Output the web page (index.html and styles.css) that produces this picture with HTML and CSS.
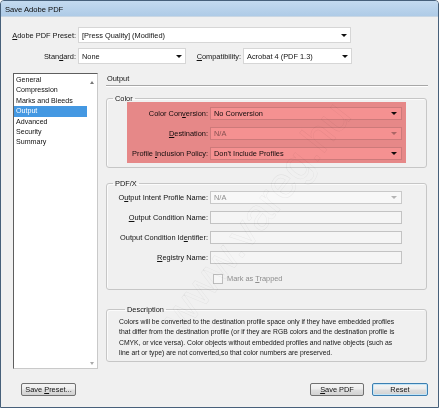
FILE: index.html
```html
<!DOCTYPE html>
<html lang="en">
<head>
<meta charset="utf-8">
<title>Save Adobe PDF</title>
<link rel="stylesheet" href="styles.css">
</head>
<body>
<div class="window">
  <div class="titlebar">Save Adobe PDF</div>
  <div class="client">
    <div class="presets">
      <div class="row">
        <span class="lbl lbl-main"><u>A</u>dobe PDF Preset:</span>
        <div class="combo combo-preset"><span class="val">[Press Quality] (Modified)</span><i class="arrow"></i></div>
      </div>
      <div class="row">
        <span class="lbl lbl-main">Stan<u>d</u>ard:</span>
        <div class="combo combo-standard"><span class="val">None</span><i class="arrow"></i></div>
        <span class="lbl lbl-compat"><u>C</u>ompatibility:</span>
        <div class="combo combo-compat"><span class="val">Acrobat 4 (PDF 1.3)</span><i class="arrow"></i></div>
      </div>
    </div>

    <div class="main">
      <div class="listbox">
        <ul class="items">
          <li>General</li>
          <li>Compression</li>
          <li>Marks and Bleeds</li>
          <li class="selected">Output</li>
          <li>Advanced</li>
          <li>Security</li>
          <li>Summary</li>
        </ul>
        <div class="scroll">
          <i class="sarrow up"></i>
          <i class="sarrow down"></i>
        </div>
      </div>

      <div class="panel">
        <div class="panel-title">Output</div>

        <fieldset class="group group-color">
          <legend>Color</legend>
          <div class="field">
            <span class="flbl">Color Con<u>v</u>ersion:</span>
            <div class="combo fcombo"><span class="val">No Conversion</span><i class="arrow"></i></div>
          </div>
          <div class="field">
            <span class="flbl"><u>D</u>estination:</span>
            <div class="combo fcombo disabled"><span class="val">N/A</span><i class="arrow"></i></div>
          </div>
          <div class="field">
            <span class="flbl">Profile <u>I</u>nclusion Policy:</span>
            <div class="combo fcombo"><span class="val">Don't Include Profiles</span><i class="arrow"></i></div>
          </div>
          <div class="mark"></div>
        </fieldset>

        <fieldset class="group group-pdfx">
          <legend>PDF/X</legend>
          <div class="field">
            <span class="flbl">O<u>u</u>tput Intent Profile Name:</span>
            <div class="combo fcombo greyed"><span class="val">N/A</span><i class="arrow"></i></div>
          </div>
          <div class="field">
            <span class="flbl"><u>O</u>utput Condition Name:</span>
            <div class="textbox"></div>
          </div>
          <div class="field">
            <span class="flbl">Output Condition Id<u>e</u>ntifier:</span>
            <div class="textbox"></div>
          </div>
          <div class="field">
            <span class="flbl"><u>R</u>egistry Name:</span>
            <div class="textbox"></div>
          </div>
          <div class="check-row">
            <span class="checkbox"></span>
            <span class="check-lbl">Mark as <u>T</u>rapped</span>
          </div>
        </fieldset>

        <fieldset class="group group-desc">
          <legend>Description</legend>
          <p class="desc">Colors will be converted to the destination profile space only if they have embedded profiles<br>that differ from the destination profile (or if they are RGB colors and the destination profile is<br>CMYK, or vice versa). Color objects without embedded profiles and native objects (such as<br>line art or type) are not converted,so that color numbers are preserved.</p>
        </fieldset>
      </div>
    </div>

    <div class="footer">
      <button class="btn btn-preset">Save <u>P</u>reset...</button>
      <span class="spacer"></span>
      <button class="btn btn-save"><u>S</u>ave PDF</button>
      <button class="btn btn-reset">Reset</button>
    </div>
  </div>
  <div class="watermark">www.vareg.hu</div>
</div>
</body>
</html>
```

FILE: styles.css
```css
* {
  box-sizing: border-box;
}

html,
body {
  margin: 0;
  padding: 0;
  background: #ffffff;
}

body {
  font-family: "Liberation Sans", Arial, sans-serif;
  font-size: 7.4px;
  color: #111;
}

u {
  text-underline-offset: 1px;
  text-decoration-thickness: 0.7px;
}

/* dialog frame */
.window {
  position: relative;
  width: 439px;
  height: 408px;
  border: 1px solid #47607a;
  border-radius: 4px 4px 0 0;
  background: #f0f0f0;
  display: flex;
  flex-direction: column;
  overflow: hidden;
}

.titlebar {
  flex: none;
  height: 16px;
  padding-left: 4px;
  line-height: 17px;
  font-size: 7.6px;
  color: #0b0b0b;
  background: linear-gradient(#c4daef, #aecbe7);
  border-bottom: 1px solid #c9d7e4;
}

.client {
  flex: 1;
  display: flex;
  flex-direction: column;
}

/* preset / standard rows */
.presets {
  padding-top: 10px;
  display: flex;
  flex-direction: column;
  gap: 5px;
}

.row {
  display: flex;
  align-items: center;
  height: 16px;
}

.lbl {
  text-align: right;
  white-space: nowrap;
}

.lbl-main {
  width: 75px;
  margin-right: 2px;
}

.lbl-compat {
  width: 54px;
  margin-left: 1px;
  margin-right: 2px;
}

.combo {
  display: flex;
  align-items: center;
  height: 100%;
  background: #ffffff;
  border: 1px solid #d6d6d6;
  padding-left: 3px;
}

.combo .val {
  flex: 1;
  white-space: nowrap;
  overflow: hidden;
}

.arrow {
  flex: none;
  width: 0;
  height: 0;
  border-left: 3px solid transparent;
  border-right: 3px solid transparent;
  border-top: 3px solid #111;
  margin-right: 3px;
}

.combo-preset {
  width: 273px;
}

.combo-standard {
  width: 108px;
}

.combo-compat {
  width: 109px;
}

/* main area: page list and settings panel */
.main {
  margin-top: 9px;
  height: 296px;
  padding-left: 12px;
  display: flex;
  gap: 8px;
}

.listbox {
  width: 85px;
  height: 100%;
  display: flex;
  background: #ffffff;
  border: 1px solid;
  border-color: #5e5e5e #c9c9c9 #c9c9c9 #5e5e5e;
}

.items {
  list-style: none;
  margin: 0;
  padding: 1px 0 0;
  width: 73px;
  font-size: 7.1px;
}

.items li {
  height: 10.4px;
  line-height: 10.4px;
  padding-left: 2px;
  white-space: nowrap;
}

.items li.selected {
  background: #4498e2;
  color: #ffffff;
}

.scroll {
  flex: 1;
  display: flex;
  flex-direction: column;
  justify-content: space-between;
  align-items: center;
  padding: 7px 0 3px;
}

.sarrow {
  width: 0;
  height: 0;
  border-left: 2.5px solid transparent;
  border-right: 2.5px solid transparent;
}

.sarrow.up {
  border-bottom: 3px solid #777;
}

.sarrow.down {
  border-top: 3px solid #aaa;
}

.panel {
  width: 322px;
  display: flex;
  flex-direction: column;
}

.panel-title {
  height: 13px;
  line-height: 11px;
  padding-left: 1px;
  border-bottom: 1px solid #a7a7a7;
  box-shadow: 0 1px 0 #ffffff;
}

/* group boxes */
.group {
  position: relative;
  width: 321px;
  margin: 0;
  padding: 0;
  min-width: 0;
  border: 1px solid #c6c6c6;
  border-radius: 3px;
  box-shadow: inset 1px 1px 0 #fbfbfb;
}

.group legend {
  margin-left: 6px;
  padding: 0 2px;
  height: 9px;
  line-height: 9px;
}

.group-color {
  margin-top: 8px;
  padding: 4px 0 7px;
  display: flex;
  flex-direction: column;
  gap: 7px;
}

.group-pdfx {
  margin-top: 11px;
  padding: 3px 0 5px;
  display: flex;
  flex-direction: column;
  gap: 7px;
}

.group-desc {
  margin-top: 15px;
  padding: 3px 0 3px 12px;
}

.field {
  display: flex;
  align-items: center;
  height: 13px;
}

.flbl {
  width: 101px;
  margin-right: 2px;
  text-align: right;
  white-space: nowrap;
}

.fcombo {
  width: 192px;
  padding-left: 3px;
}

.fcombo .arrow {
  margin-right: 4px;
}

.fcombo.disabled .val,
.fcombo.greyed .val {
  color: #8e8e8e;
}

.fcombo.disabled .arrow,
.fcombo.greyed .arrow {
  border-top-color: #b4b4b4;
}

.fcombo.greyed {
  background: #f8f8f8;
  border-color: #c9c9c9;
}

.textbox {
  width: 192px;
  height: 100%;
  background: #f5f5f5;
  border: 1px solid #c3c3c3;
}

.check-row {
  display: flex;
  align-items: center;
  height: 11px;
  margin-top: 2px;
  padding-left: 106px;
}

.checkbox {
  width: 10px;
  height: 10px;
  border: 1px solid #bdbdbd;
  background: #f6f6f6;
  margin-right: 4px;
}

.check-lbl {
  color: #8d8d8d;
}

/* red highlight laid over the colour settings */
.mark {
  position: absolute;
  left: 20px;
  top: -1px;
  width: 279px;
  height: 61px;
  background: #f59191;
  mix-blend-mode: multiply;
  pointer-events: none;
}

.desc {
  margin: 0;
  font-size: 6.8px;
  line-height: 10.3px;
  color: #161616;
  white-space: nowrap;
}

/* bottom buttons */
.footer {
  margin-top: 14px;
  display: flex;
  align-items: center;
  padding: 0 10px 0 20px;
  gap: 8px;
}

.spacer {
  flex: 1;
}

.btn {
  height: 13px;
  padding: 0;
  font-family: inherit;
  font-size: 7.4px;
  line-height: 11px;
  color: #111;
  border: 1px solid #707070;
  border-radius: 2px;
  background: linear-gradient(#f4f4f4 0%, #ececec 48%, #dfdfdf 52%, #d2d2d2 100%);
}

.btn-preset {
  width: 55px;
}

.btn-save {
  width: 54px;
}

.btn-reset {
  width: 56px;
  border-color: #3c7fb1;
  box-shadow: inset 0 0 0 1px #c4e5f7;
}

/* faint diagonal site mark */
.watermark {
  position: absolute;
  left: 255px;
  top: 215px;
  transform: translate(-50%, -50%) rotate(-52deg);
  font-size: 44px;
  color: transparent;
  -webkit-text-stroke: 0.5px rgba(0, 0, 0, 0.06);
  white-space: nowrap;
  pointer-events: none;
}
```
